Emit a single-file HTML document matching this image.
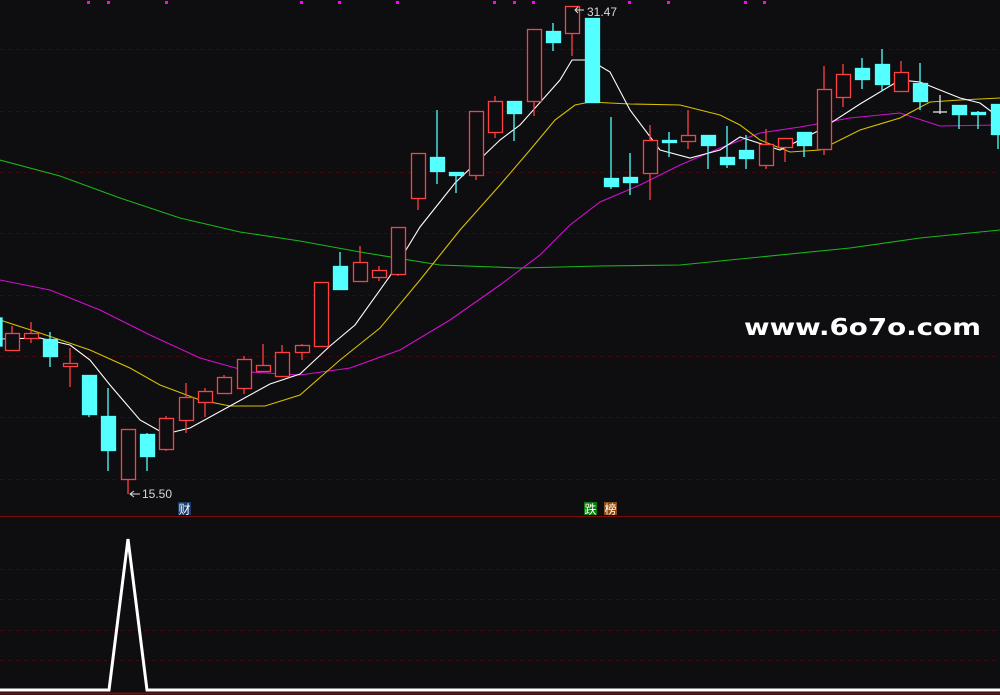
<!DOCTYPE html>
<html><head><meta charset="utf-8"><style>
html,body{margin:0;padding:0;background:#0e0e11;width:1000px;height:695px;overflow:hidden}
svg{display:block}
</style></head><body>
<svg width="1000" height="695" viewBox="0 0 1000 695" xmlns="http://www.w3.org/2000/svg">
<rect width="1000" height="695" fill="#0e0e11"/>
<g stroke="#420a0c" stroke-width="1" stroke-dasharray="3,5">
<line x1="0" y1="49.5" x2="1000" y2="49.5"/><line x1="0" y1="111.5" x2="1000" y2="111.5"/>
<line x1="0" y1="172.5" x2="1000" y2="172.5"/><line x1="0" y1="233.5" x2="1000" y2="233.5"/>
<line x1="0" y1="295.5" x2="1000" y2="295.5"/><line x1="0" y1="356.5" x2="1000" y2="356.5"/>
<line x1="0" y1="417.5" x2="1000" y2="417.5"/><line x1="0" y1="479.5" x2="1000" y2="479.5"/>
<line x1="0" y1="569.5" x2="1000" y2="569.5"/><line x1="0" y1="599.5" x2="1000" y2="599.5"/>
<line x1="0" y1="630.5" x2="1000" y2="630.5"/><line x1="0" y1="660.5" x2="1000" y2="660.5"/>
</g>
<line x1="0" y1="516.5" x2="1000" y2="516.5" stroke="#7a0c0c" stroke-width="1"/>
<line x1="0" y1="693.5" x2="1000" y2="693.5" stroke="#7a0c0c" stroke-width="2"/>
<g fill="#ff00ff">
<rect x="87" y="1" width="3" height="3"/><rect x="107" y="1" width="3" height="3"/><rect x="165" y="1" width="3" height="3"/><rect x="300" y="1" width="3" height="3"/><rect x="338" y="1" width="3" height="3"/><rect x="396" y="1" width="3" height="3"/><rect x="493" y="1" width="3" height="3"/><rect x="513" y="1" width="3" height="3"/><rect x="532" y="1" width="3" height="3"/><rect x="628" y="1" width="3" height="3"/><rect x="667" y="1" width="3" height="3"/><rect x="744" y="1" width="3" height="3"/><rect x="763" y="1" width="3" height="3"/>
</g>
<g fill="none" stroke-width="1.1">
<polyline stroke="#18b818" points="0,160 60,176 120,198 180,218 240,232 300,241 360,252 440,265 520,268 600,266 680,265 760,257 850,248 920,238 1000,230"/>
<polyline stroke="#d010d0" points="0,280 50,290 100,310 150,335 200,358 250,372 300,375 350,368 400,350 450,320 500,285 540,255 570,225 600,202 640,185 680,165 720,148 760,133 800,127 850,118 900,113 940,126 1000,125"/>
<polyline stroke="#d8c000" points="0,320 40,333 90,350 130,368 160,385 200,400 230,406 265,406 300,395 340,360 380,328 420,280 460,230 500,185 530,150 555,120 575,105 590,102 630,104 680,105 720,115 740,125 760,140 790,152 820,150 860,130 900,118 930,102 960,100 1000,98"/>
<polyline stroke="#ffffff" points="0,339 40,338 70,345 90,360 110,385 140,420 165,434 190,428 230,406 270,384 300,374 330,346 355,325 390,276 420,227 455,183 500,140 520,125 560,80 572,60 590,60 610,72 630,110 660,150 690,158 720,150 740,137 780,150 820,130 860,104 900,80 920,82 960,98 980,103 1000,118"/>
</g>
<g stroke-width="1.3">
<g stroke="#ff4040" fill="#0e0e11">
<line x1="12" y1="326" x2="12" y2="351"/><rect x="5.5" y="333.5" width="14" height="17"/>
<line x1="31" y1="322" x2="31" y2="343"/><rect x="24.5" y="333.5" width="14" height="5"/>
<line x1="70" y1="348" x2="70" y2="387"/><rect x="63.5" y="363.5" width="14" height="3"/>
<line x1="128" y1="429" x2="128" y2="494"/><rect x="121.5" y="429.5" width="14" height="50"/>
<line x1="166" y1="416" x2="166" y2="451"/><rect x="159.5" y="418.5" width="14" height="31"/>
<line x1="186" y1="383" x2="186" y2="433"/><rect x="179.5" y="397.5" width="14" height="23"/>
<line x1="205" y1="388" x2="205" y2="417"/><rect x="198.5" y="391.5" width="14" height="11"/>
<line x1="224" y1="375" x2="224" y2="393"/><rect x="217.5" y="377.5" width="14" height="16"/>
<line x1="244" y1="356" x2="244" y2="394"/><rect x="237.5" y="359.5" width="14" height="29"/>
<line x1="263" y1="344" x2="263" y2="371"/><rect x="256.5" y="365.5" width="14" height="6"/>
<line x1="282" y1="345" x2="282" y2="376"/><rect x="275.5" y="352.5" width="14" height="24"/>
<line x1="302" y1="344" x2="302" y2="360"/><rect x="295.5" y="345.5" width="14" height="7"/>
<rect x="314.5" y="282.5" width="14" height="64"/>
<line x1="360" y1="246" x2="360" y2="281"/><rect x="353.5" y="262.5" width="14" height="19"/>
<line x1="379" y1="266" x2="379" y2="281"/><rect x="372.5" y="270.5" width="14" height="7"/>
<line x1="398" y1="227" x2="398" y2="276"/><rect x="391.5" y="227.5" width="14" height="47"/>
<line x1="418" y1="153" x2="418" y2="210"/><rect x="411.5" y="153.5" width="14" height="45"/>
<line x1="476" y1="111" x2="476" y2="180"/><rect x="469.5" y="111.5" width="14" height="64"/>
<line x1="495" y1="96" x2="495" y2="138"/><rect x="488.5" y="101.5" width="14" height="31"/>
<line x1="534" y1="29" x2="534" y2="116"/><rect x="527.5" y="29.5" width="14" height="72"/>
<line x1="572" y1="6" x2="572" y2="56"/><rect x="565.5" y="6.5" width="14" height="27"/>
<line x1="650" y1="125" x2="650" y2="200"/><rect x="643.5" y="140.5" width="14" height="33"/>
<line x1="688" y1="110" x2="688" y2="149"/><rect x="681.5" y="135.5" width="14" height="6"/>
<line x1="766" y1="129" x2="766" y2="169"/><rect x="759.5" y="144.5" width="14" height="21"/>
<line x1="785" y1="138" x2="785" y2="162"/><rect x="778.5" y="138.5" width="14" height="9"/>
<line x1="824" y1="66" x2="824" y2="155"/><rect x="817.5" y="89.5" width="14" height="60"/>
<line x1="843" y1="64" x2="843" y2="107"/><rect x="836.5" y="74.5" width="14" height="23"/>
<line x1="901" y1="61" x2="901" y2="92"/><rect x="894.5" y="72.5" width="14" height="19"/>
</g>
<g stroke="#54ffff" fill="#54ffff">
<rect x="0" y="318" width="2" height="28"/>
<line x1="50" y1="332" x2="50" y2="367"/><rect x="43.5" y="339.5" width="14" height="17"/>
<line x1="89" y1="375" x2="89" y2="417"/><rect x="82.5" y="375.5" width="14" height="39"/>
<line x1="108" y1="388" x2="108" y2="471"/><rect x="101.5" y="416.5" width="14" height="34"/>
<line x1="147" y1="433" x2="147" y2="471"/><rect x="140.5" y="434.5" width="14" height="22"/>
<line x1="340" y1="252" x2="340" y2="290"/><rect x="333.5" y="266.5" width="14" height="23"/>
<line x1="437" y1="110" x2="437" y2="184"/><rect x="430.5" y="157.5" width="14" height="14"/>
<line x1="456" y1="172" x2="456" y2="193"/><rect x="449.5" y="172.5" width="14" height="3"/>
<line x1="514" y1="101" x2="514" y2="141"/><rect x="507.5" y="101.5" width="14" height="12"/>
<line x1="553" y1="23" x2="553" y2="51"/><rect x="546.5" y="31.5" width="14" height="11"/>
<rect x="585.5" y="18.5" width="14" height="84"/>
<line x1="611" y1="117" x2="611" y2="189"/><rect x="604.5" y="178.5" width="14" height="8"/>
<line x1="630" y1="153" x2="630" y2="195"/><rect x="623.5" y="177.5" width="14" height="5"/>
<line x1="669" y1="132" x2="669" y2="157"/><rect x="662.5" y="140.5" width="14" height="2"/>
<line x1="708" y1="135" x2="708" y2="169"/><rect x="701.5" y="135.5" width="14" height="10"/>
<line x1="727" y1="126" x2="727" y2="168"/><rect x="720.5" y="157.5" width="14" height="7"/>
<line x1="746" y1="135" x2="746" y2="169"/><rect x="739.5" y="150.5" width="14" height="8"/>
<line x1="804" y1="132" x2="804" y2="157"/><rect x="797.5" y="132.5" width="14" height="13"/>
<line x1="862" y1="58" x2="862" y2="89"/><rect x="855.5" y="68.5" width="14" height="11"/>
<line x1="882" y1="49" x2="882" y2="91"/><rect x="875.5" y="64.5" width="14" height="20"/>
<line x1="920" y1="63" x2="920" y2="110"/><rect x="913.5" y="83.5" width="14" height="18"/>
<line x1="959" y1="105" x2="959" y2="129"/><rect x="952.5" y="105.5" width="14" height="9"/>
<line x1="978" y1="111" x2="978" y2="129"/><rect x="971.5" y="112.5" width="14" height="2"/>
<line x1="998" y1="104" x2="998" y2="149"/><rect x="991.5" y="104.5" width="14" height="30"/>
</g>
<g stroke="#e0e0e0"><line x1="940" y1="95" x2="940" y2="114"/><line x1="933" y1="112" x2="947" y2="112"/></g>
</g>
<g font-family="Liberation Sans, sans-serif" font-size="12" fill="#d8d8d8">
<text x="142" y="498">15.50</text>
<text x="587" y="16">31.47</text>
</g>
<path d="M140,494 H131 M134,491 L130,494 L134,497" stroke="#e0e0e0" fill="none"/>
<path d="M584,10 H576 M578,7 L575,10 L578,13" stroke="#e0e0e0" fill="none"/>
<rect x="178" y="502" width="13" height="13" fill="#1a3a6a"/>
<text x="178.5" y="513.5" font-family="Noto Sans CJK SC, sans-serif" font-size="12" fill="#fff">财</text>
<rect x="584" y="502" width="13" height="13" fill="#0a7a0a"/>
<text x="584.5" y="513.5" font-family="Noto Sans CJK SC, sans-serif" font-size="12" fill="#fff">跌</text>
<rect x="604" y="502" width="13" height="13" fill="#8a4a10"/>
<text x="604.5" y="513.5" font-family="Noto Sans CJK SC, sans-serif" font-size="12" fill="#fff">榜</text>
<text x="744" y="335" font-family="DejaVu Sans, sans-serif" font-weight="bold" font-size="23" fill="#ffffff" textLength="237" lengthAdjust="spacingAndGlyphs">www.6o7o.com</text>
<polyline points="0,690 109,690 128,539 147,690 1000,690" fill="none" stroke="#ffffff" stroke-width="3"/>
</svg>
</body></html>
